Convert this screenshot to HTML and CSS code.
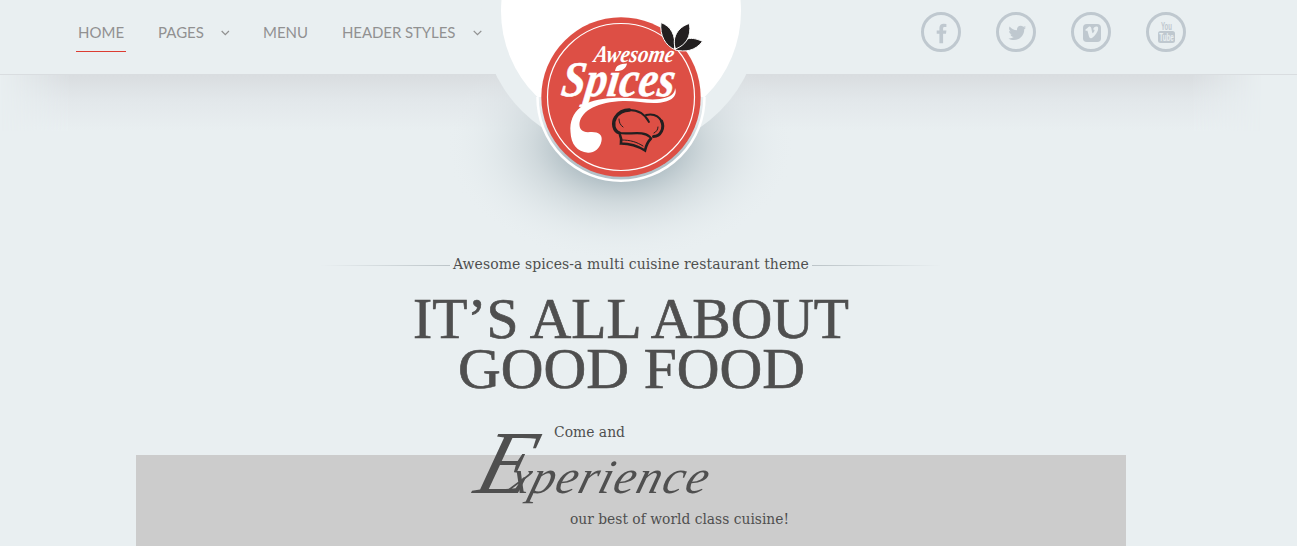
FILE: index.html
```html
<!DOCTYPE html>
<html lang="en">
<head>
<meta charset="utf-8">
<title>Awesome Spices</title>
<link rel="stylesheet" href="styles.css">
</head>
<body>
<header class="bar">
  <nav class="nav">
    <a class="nav-item active"><span>HOME</span></a>
    <a class="nav-item pages"><span>PAGES</span><svg class="chev" viewBox="0 0 9 6"><path d="M.7.9 4.5 4.700 8.300.9"/></svg></a>
    <a class="nav-item menu"><span>MENU</span></a>
    <a class="nav-item styles"><span>HEADER STYLES</span><svg class="chev" viewBox="0 0 9 6"><path d="M.7.9 4.5 4.700 8.300.9"/></svg></a>
  </nav>
  <div class="social">
    <a class="soc"><svg viewBox="0 0 40 40"><path d="M25.400 11.900v3.100h-1.800c-1.200 0-1.500.6-1.500 1.600v1.900h3.300l-.4 3.200h-2.900v9.500h-3.700v-9.500h-2.700v-3.200h2.700v-2.400c0-2.800 1.700-4.300 4.300-4.300z"/></svg></a>
    <a class="soc"><svg viewBox="0 0 40 40"><path d="M30 15.400c-.5.7-1.100 1.300-1.800 1.800v.5c0 4.900-3.600 10.300-10.300 10.300-2 0-3.900-.6-5.400-1.600 1.900.2 3.800-.3 5.200-1.400-1.600 0-2.900-1.100-3.300-2.500.5.1 1.100.1 1.600 0-1.700-.4-2.900-1.800-2.900-3.600.5.3 1 .4 1.600.4-1.600-1.100-2.100-3.300-1.100-4.900 1.800 2.200 4.500 3.600 7.500 3.800-.6-2.500 1.200-4.500 3.500-4.500 1 0 2 .4 2.700 1.100.8-.2 1.600-.4 2.300-.9-.3.900-.9 1.500-1.600 2 .7-.1 1.400-.3 2-.5z"/></svg></a>
    <a class="soc"><svg viewBox="0 0 40 40"><rect x="12" y="12" width="18" height="18" rx="3.800"/><path class="knock" d="m14.300 17.700 3.200-2.700c1.500-1.100 2.600-.3 2.900 1.500.4 2.200.8 4.700 1.300 4.700.6 0 1.900-2 1.800-2.900 0-.9-.8-.9-1.500-.6.6-2.200 2-3.400 3.700-3.200 1.600.2 1.700 1.600 1.300 3.300-.6 2.800-4.700 8.500-7 8.500-1.600 0-2-1.700-2.500-3.800-.5-1.800-.8-4.100-1.400-4.100-.3 0-.7.200-1.200.6z"/></svg></a>
    <a class="soc"><svg viewBox="0 0 40 40"><rect x="12" y="19" width="17" height="12" rx="2.500"/><text x="15" y="18" textLength="11" lengthAdjust="spacingAndGlyphs">You</text><text class="knock" x="13.300" y="29.200" textLength="14.500" lengthAdjust="spacingAndGlyphs">Tube</text></svg></a>
  </div>
</header>
<div class="bar-shadow"></div>
<svg class="logo" viewBox="0 0 400 280" role="img">
  <defs>
    <radialGradient id="glow"><stop offset="0" stop-color="#8fa3ab"/><stop offset=".3" stop-color="#a3b3ba" stop-opacity=".8"/><stop offset=".5" stop-color="#b6c2c7" stop-opacity=".48"/><stop offset=".75" stop-color="#cfd8dc" stop-opacity=".22"/><stop offset="1" stop-color="#e9eff1" stop-opacity="0"/></radialGradient>
    <linearGradient id="crescent" x1="0" y1="0" x2="0" y2="1"><stop offset=".5" stop-color="#e9eff1"/><stop offset=".65" stop-color="#dce3e7"/><stop offset=".85" stop-color="#b4c1c8"/></linearGradient>
    <clipPath id="low"><rect x="0" y="97" width="400" height="183"/></clipPath>
    <clipPath id="under"><rect x="0" y="75" width="400" height="205"/></clipPath>
  </defs>
  <ellipse cx="199" cy="145" rx="175" ry="116" fill="url(#glow)" clip-path="url(#under)"/>
  <circle cx="200" cy="12" r="140" fill="#e9eff1"/>
  <circle cx="200" cy="11" r="120" fill="#fff"/>
  <circle cx="200" cy="97.200" r="83.500" fill="url(#crescent)" stroke="#fff" stroke-width="2.500" clip-path="url(#low)"/>
  <circle cx="200" cy="97" r="79.700" fill="#dd4f45"/>
  <circle cx="200" cy="97" r="73.500" fill="none" stroke="#fff" stroke-width="1.200"/>
  <g fill="#231f20" stroke="#fff" stroke-width="1">
    <path d="M240 22.500c10 4 15 12 13.500 27-9-4-15-14-13.500-27z"/>
    <path d="M281.500 41.500c-8 10-17 10.500-27.500 8.500 5-11 15-15 27.500-8.500z"/>
    <path d="M268.500 23.500c2 14-4 21.500-14 25.500-4-11 2-22 14-25.500z"/>
  </g>
  <g class="script">
    <text class="awesome" transform="translate(172 62) skewX(-10)" textLength="80" lengthAdjust="spacingAndGlyphs">Awesome</text>
    <text class="spices" transform="translate(139 96) skewX(-8)" textLength="113" lengthAdjust="spacingAndGlyphs">Spıces</text>
  </g>
  <path fill="#fff" d="M194 71c1-6 5-7 12-7.500-1 5-5 8-12 7.500z"/>
  <path fill="#fff" d="M254 88C256.500 94 253 101 239 102.700 226 104 215 100.500 202 101 177 102 161 110 158.500 123 158 129 161 132 167 132.300 176 131 182 134 180.500 141 179 149 173 153 167 152.700 156 152 150 144 149.500 132 148 111 163 99 192 98 211 97 226 100.500 239 99 249 97.500 254 94 254 88z"/>
  <g fill="none" stroke="#231f20" stroke-linecap="round">
    <path stroke-width="3.300" d="M198.500 133c-6-2-7.500-10-4-15.500 3.500-5.500 9-7.500 14-7.500"/>
    <path stroke-width="1.800" d="M208 110c9 0 16 4 20 12"/>
    <path stroke-width="2" d="M225 115c7-1.500 13 1 16 7"/>
    <path stroke-width="3" d="M240.500 121c3.500 7-1 15.500-8 15.500"/>
    <path stroke-width="2.200" d="M198 133c10 2 24-3 31 4"/>
    <path stroke-width="2.600" d="M199 135c1.500 3 1.500 5 1 8.500 8 0 16 2 24 7 1-5 3-9 6-12"/>
    <path stroke-width="1" d="M201 140c8 0 15 2 21 6M198 119c0 3 1 6 4 8M237 127c0 3-2 5-4 6"/>
  </g>
</svg>
<main class="hero">
  <div class="tag"><i class="rule left"></i><p class="tagline">Awesome spices-a multi cuisine restaurant theme</p><i class="rule right"></i></div>
  <h1 class="title"><svg viewBox="0 0 440 104"><text x="2" y="44" textLength="436" lengthAdjust="spacingAndGlyphs">IT’S ALL ABOUT</text><text x="47" y="94" textLength="347" lengthAdjust="spacingAndGlyphs">GOOD FOOD</text></svg></h1>
  <div class="panel"></div>
  <svg class="experience" viewBox="0 0 340 131">
    <text class="small" x="94" y="22" textLength="71" lengthAdjust="spacingAndGlyphs">Come and</text>
    <text class="word" transform="translate(12 78) skewX(-16)"><tspan class="big">E</tspan><tspan class="rest" x="34 56 81 104 124 139 162 188 211">xperience</tspan></text>
    <text class="small" x="110" y="109" textLength="219" lengthAdjust="spacingAndGlyphs">our best of world class cuisine!</text>
  </svg>
</main>
</body>
</html>
```
FILE: styles.css
```css
* { box-sizing: border-box; }
body { margin: 0; height: 546px; overflow: hidden; position: relative; background: #e9eff1; color: #4f4f4f; font-family: "Liberation Serif", serif; }
.bar { height: 75px; border-bottom: 1px solid #d9dde0; display: flex; justify-content: space-between; padding: 12px 111px 0 76px; }
.nav { display: flex; font: 15px/20px Lato, sans-serif; color: #919191; }
.nav-item { height: 40px; padding: 10px 2px 0; display: flex; }
.active { border-bottom: 1px solid #dc3c32; width: 50px; }
.pages { margin-left: 30px; width: 76px; }
.menu { margin-left: 29px; width: 50px; }
.styles { margin-left: 29px; white-space: nowrap; letter-spacing: -.09px; }
.chev { width: 9px; height: 6px; margin: 8px 0 0 17.5px; fill: none; stroke: #919191; stroke-width: 1.3; }
.social { display: flex; gap: 35px; }
.soc { width: 40px; height: 40px; border: 3px solid #bfc8cf; border-radius: 50%; }
.soc svg { display: block; width: 40px; height: 40px; margin: -3px; fill: #bfc8cf; }
.soc text { font: bold 10.5px "Liberation Sans", sans-serif; }
.soc .knock { fill: #e9eff1; }
.bar-shadow { width: 1262px; height: 56px; background: linear-gradient(#d9dde0, #e2e7ea 42%, #e9eff1); mask-image: linear-gradient(90deg, transparent, #000 70px, #000 1192px, transparent); }
.logo { position: absolute; left: 421px; top: 0; width: 400px; height: 280px; }
.script text { fill: #fff; stroke: #fff; font-family: "Liberation Serif", serif; font-style: italic; font-weight: bold; }
.script .awesome { font-size: 24px; stroke-width: 0; }
.script .spices { font-size: 50px; stroke-width: .5px; }
.hero { position: relative; width: 1262px; height: 415px; padding-top: 122px; }
.tag { display: flex; justify-content: center; align-items: center; height: 22px; gap: 3px; }
.tagline { margin: 0; width: 356px; white-space: nowrap; font: 14px/22px "DejaVu Serif", serif; letter-spacing: .07px; }
.rule { width: 130px; height: 1px; margin-top: 2px; }
.left { background: linear-gradient(90deg, transparent, #bcc4c8); }
.right { background: linear-gradient(270deg, transparent, #bcc4c8); }
.title { margin: 19px auto 0; width: 440px; height: 104px; }
.title svg { display: block; width: 440px; height: 104px; overflow: visible; font: 58px "Liberation Serif", serif; fill: #4f4f4f; stroke: #4f4f4f; stroke-width: .7px; }
.panel { width: 990px; height: 91px; margin: 57px auto 0; background: #ccc; }
.experience { position: absolute; left: 460px; top: 284px; width: 340px; height: 131px; overflow: visible; fill: #4f4f4f; }
.small { font: 14px "DejaVu Serif", serif; }
.word { font-family: "Liberation Serif", serif; font-style: italic; }
.big { font-size: 90px; }
.rest { font-size: 48px; }
```
